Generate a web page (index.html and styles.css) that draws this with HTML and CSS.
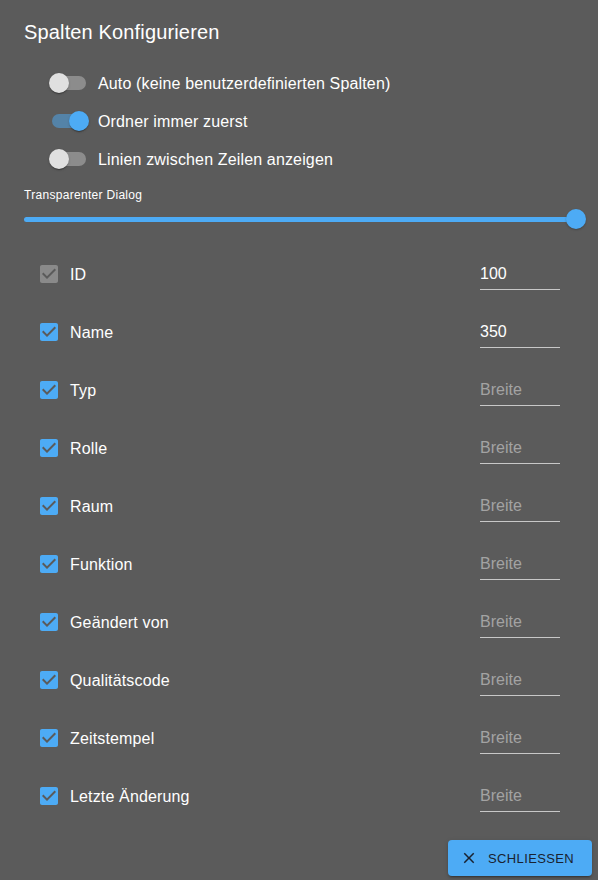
FILE: index.html
```html
<!DOCTYPE html>
<html lang="de">
<head>
<meta charset="utf-8">
<title>Spalten Konfigurieren</title>
<link rel="stylesheet" href="styles.css">
</head>
<body>
<div class="dialog">
  <h2 class="title">Spalten Konfigurieren</h2>

  <div class="toggles">
    <label class="toggle-row">
      <span class="switch"><span class="track"></span><span class="thumb"></span></span>
      <span class="toggle-label">Auto (keine benutzerdefinierten Spalten)</span>
    </label>
    <label class="toggle-row">
      <span class="switch on"><span class="track"></span><span class="thumb"></span></span>
      <span class="toggle-label">Ordner immer zuerst</span>
    </label>
    <label class="toggle-row">
      <span class="switch"><span class="track"></span><span class="thumb"></span></span>
      <span class="toggle-label">Linien zwischen Zeilen anzeigen</span>
    </label>
  </div>

  <div class="caption">Transparenter Dialog</div>
  <div class="slider">
    <span class="slider-track"></span>
    <span class="slider-thumb"></span>
  </div>

  <div class="columns">
    <div class="col-row">
      <svg class="cb disabled" viewBox="0 0 24 24"><path d="M19 3H5c-1.11 0-2 .9-2 2v14c0 1.1.89 2 2 2h14c1.11 0 2-.9 2-2V5c0-1.1-.89-2-2-2zm-9 14l-5-5 1.41-1.41L10 14.17l7.59-7.59L19 8l-9 9z"/></svg>
      <span class="col-label">ID</span>
      <span class="width-input"><span class="value">100</span></span>
    </div>
    <div class="col-row">
      <svg class="cb" viewBox="0 0 24 24"><path d="M19 3H5c-1.11 0-2 .9-2 2v14c0 1.1.89 2 2 2h14c1.11 0 2-.9 2-2V5c0-1.1-.89-2-2-2zm-9 14l-5-5 1.41-1.41L10 14.17l7.59-7.59L19 8l-9 9z"/></svg>
      <span class="col-label">Name</span>
      <span class="width-input"><span class="value">350</span></span>
    </div>
    <div class="col-row">
      <svg class="cb" viewBox="0 0 24 24"><path d="M19 3H5c-1.11 0-2 .9-2 2v14c0 1.1.89 2 2 2h14c1.11 0 2-.9 2-2V5c0-1.1-.89-2-2-2zm-9 14l-5-5 1.41-1.41L10 14.17l7.59-7.59L19 8l-9 9z"/></svg>
      <span class="col-label">Typ</span>
      <span class="width-input"><span class="placeholder">Breite</span></span>
    </div>
    <div class="col-row">
      <svg class="cb" viewBox="0 0 24 24"><path d="M19 3H5c-1.11 0-2 .9-2 2v14c0 1.1.89 2 2 2h14c1.11 0 2-.9 2-2V5c0-1.1-.89-2-2-2zm-9 14l-5-5 1.41-1.41L10 14.17l7.59-7.59L19 8l-9 9z"/></svg>
      <span class="col-label">Rolle</span>
      <span class="width-input"><span class="placeholder">Breite</span></span>
    </div>
    <div class="col-row">
      <svg class="cb" viewBox="0 0 24 24"><path d="M19 3H5c-1.11 0-2 .9-2 2v14c0 1.1.89 2 2 2h14c1.11 0 2-.9 2-2V5c0-1.1-.89-2-2-2zm-9 14l-5-5 1.41-1.41L10 14.17l7.59-7.59L19 8l-9 9z"/></svg>
      <span class="col-label">Raum</span>
      <span class="width-input"><span class="placeholder">Breite</span></span>
    </div>
    <div class="col-row">
      <svg class="cb" viewBox="0 0 24 24"><path d="M19 3H5c-1.11 0-2 .9-2 2v14c0 1.1.89 2 2 2h14c1.11 0 2-.9 2-2V5c0-1.1-.89-2-2-2zm-9 14l-5-5 1.41-1.41L10 14.17l7.59-7.59L19 8l-9 9z"/></svg>
      <span class="col-label">Funktion</span>
      <span class="width-input"><span class="placeholder">Breite</span></span>
    </div>
    <div class="col-row">
      <svg class="cb" viewBox="0 0 24 24"><path d="M19 3H5c-1.11 0-2 .9-2 2v14c0 1.1.89 2 2 2h14c1.11 0 2-.9 2-2V5c0-1.1-.89-2-2-2zm-9 14l-5-5 1.41-1.41L10 14.17l7.59-7.59L19 8l-9 9z"/></svg>
      <span class="col-label">Geändert von</span>
      <span class="width-input"><span class="placeholder">Breite</span></span>
    </div>
    <div class="col-row">
      <svg class="cb" viewBox="0 0 24 24"><path d="M19 3H5c-1.11 0-2 .9-2 2v14c0 1.1.89 2 2 2h14c1.11 0 2-.9 2-2V5c0-1.1-.89-2-2-2zm-9 14l-5-5 1.41-1.41L10 14.17l7.59-7.59L19 8l-9 9z"/></svg>
      <span class="col-label">Qualitätscode</span>
      <span class="width-input"><span class="placeholder">Breite</span></span>
    </div>
    <div class="col-row">
      <svg class="cb" viewBox="0 0 24 24"><path d="M19 3H5c-1.11 0-2 .9-2 2v14c0 1.1.89 2 2 2h14c1.11 0 2-.9 2-2V5c0-1.1-.89-2-2-2zm-9 14l-5-5 1.41-1.41L10 14.17l7.59-7.59L19 8l-9 9z"/></svg>
      <span class="col-label">Zeitstempel</span>
      <span class="width-input"><span class="placeholder">Breite</span></span>
    </div>
    <div class="col-row">
      <svg class="cb" viewBox="0 0 24 24"><path d="M19 3H5c-1.11 0-2 .9-2 2v14c0 1.1.89 2 2 2h14c1.11 0 2-.9 2-2V5c0-1.1-.89-2-2-2zm-9 14l-5-5 1.41-1.41L10 14.17l7.59-7.59L19 8l-9 9z"/></svg>
      <span class="col-label">Letzte Änderung</span>
      <span class="width-input"><span class="placeholder">Breite</span></span>
    </div>
  </div>

  <div class="actions">
    <button class="close-btn" type="button">
      <svg class="close-icon" viewBox="0 0 24 24"><path d="M19 6.41 17.59 5 12 10.59 6.41 5 5 6.41 10.59 12 5 17.59 6.41 19 12 13.41 17.59 19 19 17.59 13.41 12z"/></svg>
      <span>Schliessen</span>
    </button>
  </div>
</div>
</body>
</html>
```

FILE: styles.css
```css
html, body {
  margin: 0;
  padding: 0;
  height: 880px;
  overflow: hidden;
}

body {
  background: #5b5b5b;
  color: #ffffff;
  font-family: "Liberation Sans", Arial, sans-serif;
}

.dialog {
  display: flex;
  flex-direction: column;
  height: 880px;
}

.title {
  margin: 0;
  padding: 16px 24px 0;
  font-size: 20px;
  font-weight: 400;
  line-height: 32px;
  letter-spacing: 0.15px;
}

.toggles {
  margin-top: 16px;
  padding-left: 40px;
  display: flex;
  flex-direction: column;
}

.toggle-row {
  display: flex;
  align-items: center;
  height: 38px;
}

.switch {
  position: relative;
  width: 58px;
  height: 38px;
  flex: none;
}

.track {
  position: absolute;
  left: 12px;
  top: 12px;
  width: 34px;
  height: 14px;
  border-radius: 7px;
  background: #8c8c8c;
}

.thumb {
  position: absolute;
  left: 9px;
  top: 9px;
  width: 20px;
  height: 20px;
  border-radius: 50%;
  background: #e0e0e0;
  box-shadow: 0 2px 1px -1px rgba(0,0,0,0.2), 0 1px 1px 0 rgba(0,0,0,0.14), 0 1px 3px 0 rgba(0,0,0,0.12);
}

.switch.on .track {
  background: #5483a8;
}

.switch.on .thumb {
  left: 29px;
  background: #4dabf5;
}

.toggle-label {
  padding-top: 2px;
  font-size: 16px;
  line-height: 24px;
  letter-spacing: 0.15px;
}

.caption {
  margin-top: 8px;
  padding-left: 24px;
  font-size: 12px;
  line-height: 18px;
  letter-spacing: 0.3px;
}

.slider {
  position: relative;
  height: 30px;
  margin: 0 22px 0 24px;
}

.slider-track {
  position: absolute;
  left: 0;
  right: 0;
  top: 12.5px;
  height: 5px;
  border-radius: 3px;
  background: #4dabf5;
}

.slider-thumb {
  position: absolute;
  right: -10px;
  top: 5px;
  width: 20px;
  height: 20px;
  border-radius: 50%;
  background: #4dabf5;
  box-shadow: 0 1px 2px rgba(0,0,0,0.25);
}

.columns {
  margin-top: 11px;
  display: flex;
  flex-direction: column;
}

.col-row {
  display: flex;
  align-items: center;
  height: 58px;
  padding-left: 37px;
  padding-right: 38px;
}

.cb {
  width: 24px;
  height: 24px;
  flex: none;
  fill: #4dabf5;
}

.cb.disabled {
  fill: #8a8a8a;
}

.col-label {
  margin-left: 9px;
  padding-top: 2px;
  flex: 1;
  font-size: 16px;
  line-height: 24px;
  letter-spacing: 0.15px;
}

.width-input {
  width: 80px;
  box-sizing: border-box;
  margin-top: 3px;
  padding: 3px 0 5px;
  border-bottom: 1px solid #c8c8c8;
  font-size: 16px;
  line-height: 20px;
}

.value {
  color: #ffffff;
}

.placeholder {
  color: #a3a3a3;
}

.actions {
  margin-top: 15px;
  display: flex;
  justify-content: flex-end;
  padding-right: 6px;
}

.close-btn {
  display: flex;
  align-items: center;
  height: 36px;
  width: 144px;
  box-sizing: border-box;
  padding: 0 0 0 12px;
  border: none;
  border-radius: 4px;
  background: #4dabf5;
  color: #1a2230;
  font-family: "Liberation Sans", Arial, sans-serif;
  font-size: 13px;
  letter-spacing: 0.37px;
  text-transform: uppercase;
  box-shadow: 0 3px 1px -2px rgba(0,0,0,0.2), 0 2px 2px 0 rgba(0,0,0,0.14), 0 1px 5px 0 rgba(0,0,0,0.12);
}

.close-icon {
  width: 18px;
  height: 18px;
  fill: #1a2230;
  margin-right: 10px;
  flex: none;
}
```
